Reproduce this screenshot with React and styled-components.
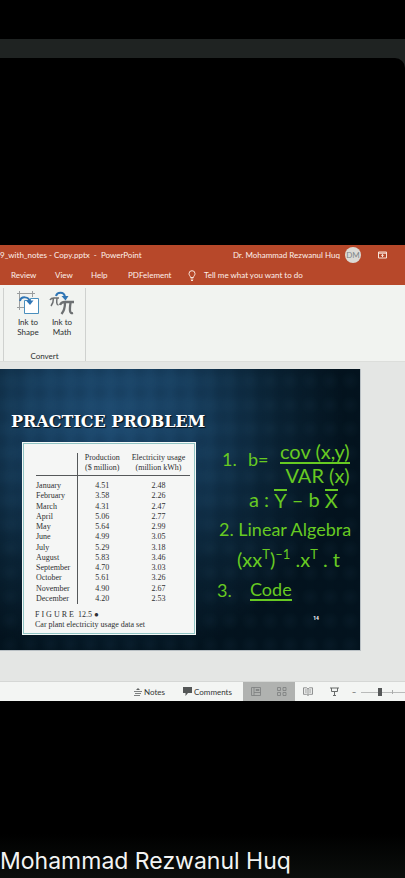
import React from "react";
import styled, { createGlobalStyle } from "styled-components";

const GlobalStyle = createGlobalStyle`
  * { box-sizing: border-box; }
  body { margin: 0; background: #000; overflow-x: hidden; font-family: "Lato", "Noto Sans", sans-serif; }
  button { border: 0; padding: 0; margin: 0; background: none; font: inherit; color: inherit; white-space: nowrap; }
`;

const Screen = styled.div`
  min-height: 100vh;
  display: flex;
  flex-direction: column;
  overflow: hidden;
  background: #000;
`;
const TopBand = styled.div`
  margin-top: 39px;
  padding-top: 19px;
  background: #1f2322;
`;
const StageTop = styled.div`
  height: 187px;
  background: #000;
  border-top-right-radius: 10px;
`;
const Header = styled.header`
  background: #b7482a;
  color: #fdf0ea;
  font-size: 8px;
  line-height: 20px;
`;
const TitleBar = styled.div`
  display: flex;
  align-items: center;
  height: 20px;
  white-space: pre;
`;
const FileName = styled.span`
  flex: 1;
`;
const Avatar = styled.span`
  width: 16px;
  height: 16px;
  margin: 0 17px 0 5px;
  border-radius: 50%;
  background: #dcdad5;
  color: #7d8588;
  line-height: 16px;
  text-align: center;
`;
const DisplayButton = styled.button`
  display: flex;
  margin-right: 18px;
`;
const Tabs = styled.nav`
  display: flex;
  align-items: center;
  height: 20px;
  padding-left: 11px;
`;
const Tab = styled.button`
  width: ${(p) => p.$width}px;
  text-align: left;
`;
const TellMe = styled.button`
  display: flex;
  align-items: center;
  gap: 8px;
`;
const Ribbon = styled.section`
  display: flex;
  height: 77px;
  padding: 3px 0 0 3px;
  background: #f1f3f0;
  border-bottom: 1px solid #dcdedb;
  color: #2e3030;
  font-size: 8px;
`;
const Group = styled.div`
  display: flex;
  flex-direction: column;
  justify-content: space-between;
  width: 83px;
  border: solid #cfd1cf;
  border-width: 0 1px;
`;
const Tools = styled.div`
  display: flex;
  padding: 3px 0 0 7px;
`;
const Tool = styled.button`
  display: flex;
  flex-direction: column;
  align-items: center;
  width: 34px;
  line-height: 10px;
  text-align: center;
`;
const GroupName = styled.div`
  line-height: 10px;
  text-align: center;
`;
const Workspace = styled.main`
  padding: 7px 44px 30px 0;
  background: #e4e6e4;
`;
const Slide = styled.section`
  min-height: 282px;
  padding: 40px 0 13px 11px;
  border: solid #b9c0c4;
  border-width: 0 1px 1px 0;
  color: #fff;
  background:
    radial-gradient(circle at 50% 50%, rgba(90, 150, 190, 0.04) 0 2px, transparent 9px) 0 0 / 20px 24px,
    radial-gradient(circle at 50% 50%, rgba(0, 10, 25, 0.08) 0 2px, transparent 9px) 10px 12px / 20px 24px,
    radial-gradient(ellipse 235px 240px at 110px 55px, #1d4a70 0%, #173e5e 35%, #0a2335 70%, #03131e 100%);
`;
const SlideTitle = styled.h1`
  margin: 0;
  font: bold 16px/25px "DejaVu Serif", serif;
  text-shadow: 1px 1px 1px #06121c;
  white-space: nowrap;
`;
const SlideBody = styled.div`
  display: flex;
  align-items: flex-start;
  margin-top: 8px;
`;
const Figure = styled.figure`
  flex: none;
  width: 174px;
  margin: 0 0 0 11px;
  padding: 10px 4px 4px 13px;
  border: 1px solid #f4f9f8;
  box-shadow: inset 0 0 0 1px #91c4c4;
  background: #f5f6f5;
  color: #2f3032;
  font: 8px/10px "Liberation Serif", serif;
`;
const DataTable = styled.table`
  width: 154px;
  height: 151px;
  border-collapse: collapse;
  white-space: nowrap;
  th, td { padding: 0; font-weight: 400; text-align: center; }
  th:first-child { width: 41px; text-align: left; border-right: 1px solid #55585a; }
  th:nth-child(2) { width: 50px; }
  thead th { height: 22px; padding-bottom: 2px; border-bottom: 1px solid #55585a; }
  tbody tr:first-child > * { padding-top: 5px; }
`;
const Caption = styled.figcaption`
  padding-top: 6px;
  margin-left: -1px;
  line-height: 10px;
`;
const Spaced = styled.span`
  white-space: pre;
`;
const Ink = styled.div`
  flex: 1;
  min-width: 0;
  padding-left: 21px;
  color: #67ca22;
  font: 18px/20px "Lato", sans-serif;
  white-space: pre;
`;
const InkRow = styled.div`
  display: flex;
  align-items: center;
  height: ${(p) => p.$height}px;
  padding-left: ${(p) => p.$indent || 0}px;
  font-size: ${(p) => p.$size || 18}px;
`;
const InkWord = styled.span`
  width: ${(p) => p.$width}px;
  padding-bottom: ${(p) => (p.$lifted ? 8 : 0)}px;
`;
const Fraction = styled.span`
  display: flex;
  flex-direction: column;
  align-items: flex-end;
  font-size: 20px;
  line-height: 22px;
`;
const Numerator = styled.span`
  border-bottom: 2px solid #67ca22;
`;
const Bar = styled.span`
  border-top: 2px solid #67ca22;
  line-height: 18px;
`;
const Underlined = styled.span`
  border-bottom: 2px solid #67ca22;
`;
const Raised = styled.sup`
  font-size: 13px;
  line-height: 0;
`;
const PageNumber = styled.div`
  padding: 8px 41px 0 0;
  color: #fff;
  font: bold 5px/8px "Roboto", sans-serif;
  text-align: right;
`;
const StatusBar = styled.footer`
  display: flex;
  align-items: center;
  height: 20px;
  padding-left: 134px;
  border-top: 1px solid #d5d7d5;
  background: #f3f5f3;
  color: #333636;
  font-size: 8px;
`;
const StatusButton = styled.button`
  display: flex;
  align-items: center;
  gap: 2px;
  width: ${(p) => p.$width}px;
`;
const ViewButton = styled.button`
  display: flex;
  align-items: center;
  justify-content: center;
  width: 26px;
  height: 19px;
  background: ${(p) => (p.$active ? "#b0b2b0" : "transparent")};
`;
const ZoomOut = styled.button`
  display: flex;
  align-items: center;
  justify-content: center;
  width: 14px;
  height: 19px;
`;
const ZoomSlider = styled.input`
  flex: 1;
  min-width: 0;
  height: 19px;
  margin: 0;
  appearance: none;
  background:
    linear-gradient(#a9abaa, #a9abaa) 31px 8px / 1px 4px no-repeat,
    linear-gradient(#b9bbba, #b9bbba) 0 10px / 100% 1px no-repeat;
  &::-webkit-slider-thumb {
    appearance: none;
    width: 4px;
    height: 8px;
    background: #555858;
  }
`;
const Speaker = styled.footer`
  flex: 1;
  display: flex;
  align-items: flex-end;
  padding-bottom: 1px;
  background: linear-gradient(#000 75%, #0b0e0c);
  color: #f3f4f3;
  font: 23px/32px "Inter", sans-serif;
  white-space: nowrap;
`;

const rows = [
  ["January", "4.51", "2.48"], ["February", "3.58", "2.26"], ["March", "4.31", "2.47"],
  ["April", "5.06", "2.77"], ["May", "5.64", "2.99"], ["June", "4.99", "3.05"],
  ["July", "5.29", "3.18"], ["August", "5.83", "3.46"], ["September", "4.70", "3.03"],
  ["October", "5.61", "3.26"], ["November", "4.90", "2.67"], ["December", "4.20", "2.53"],
];

const DisplayIcon = () => (
  <svg width="9" height="8" viewBox="0 0 9 8" fill="none" stroke="#f8e4da">
    <path d="M.5 1h8v6h-8zM.5 2.2h8M4.5 6V3.5M3.2 4.7l1.3-1.3 1.3 1.3" />
  </svg>
);
const Bulb = () => (
  <svg width="8" height="11" viewBox="0 0 8 11" fill="none" stroke="#f8e4da">
    <path d="M2.5 7.5C2.5 6 1 5.5 1 3.7a3 3 0 0 1 6 0c0 1.8-1.5 2.3-1.5 3.8zM2.7 9h2.6M3 10.5h2" />
  </svg>
);
const InkShape = () => (
  <svg width="24" height="26" viewBox="0 0 24 26" fill="none">
    <path d="M1 2.500h18M3.500 0v19M16.500 0v6M1 16.500h7" stroke="#9a9d9e" />
    <path d="M8.500 9.500h6v-2h8v15h-14z" fill="#fff" stroke="#4a8fbd" />
    <path d="M4 10c1-5 9-5 10 1" stroke="#2f75b5" strokeWidth="2" />
    <path d="M10 9.500h7.500l-3.500 4.500z" fill="#2f75b5" />
  </svg>
);
const InkMath = () => (
  <svg width="26" height="26" viewBox="0 0 26 26" fill="none" stroke="#6d7072">
    <path d="M1 9c1-2 2-2 4-2h5M4.500 7c0 4-1 6-2.500 8M8 7c-.5 4-.6 7 1.500 7" strokeWidth="1.500" />
    <path d="M11 14c1-3 3-3 5-3h9M16 12c0 5-1 8-3.500 11M21.500 12c-1 7-1 11 2.500 10" strokeWidth="2.300" />
    <path d="M7 5c1-4 8-5 9 1" stroke="#2f75b5" strokeWidth="2" />
    <path d="M12.500 5h7l-3 4.500z" fill="#2f75b5" stroke="none" />
  </svg>
);
const NotesIcon = () => (
  <svg width="8" height="9" viewBox="0 0 8 9" fill="none" stroke="#606363">
    <path d="M0 4.500h8M1 6.500h6M0 8.500h6" strokeWidth=".8" /><path d="M2 3l2-2 2 2z" fill="#606363" stroke="none" />
  </svg>
);
const CommentIcon = () => (
  <svg width="9" height="9" viewBox="0 0 9 9" fill="#545757"><path d="M0 0h9v6H5L2.500 9V6H0z" /></svg>
);
const NormalIcon = () => (
  <svg width="10" height="9" viewBox="0 0 10 9" fill="none" stroke="#7b7e7d"><path d="M.5.500h9v8h-9zM3 .5v8M3 5.500h6.500M5 2.500h3v1H5z" strokeWidth=".8" /></svg>
);
const SorterIcon = () => (
  <svg width="10" height="9" viewBox="0 0 10 9" fill="none" stroke="#7b7e7d"><path d="M.5.500h3v3h-3zM6 .5h3v3H6zM.5 5.500h3v3h-3zM6 5.500h3v3H6z" strokeWidth=".8" /></svg>
);
const BookIcon = () => (
  <svg width="10" height="9" viewBox="0 0 10 9" fill="none" stroke="#767978"><path d="M.5.800h3L5 2l1.500-1.200h3v6.500h-3L5 8.500 3.500 7.300h-3zM5 2v6M1.800 3h2M1.800 5h2M6.200 3h2M6.200 5h2" strokeWidth=".8" /></svg>
);
const ShowIcon = () => (
  <svg width="9" height="9" viewBox="0 0 9 9" fill="none" stroke="#676a69"><path d="M0 1h9M1.500 1v3.500h6V1M4.500 4.500V8M3 8.500h3" /></svg>
);

export default function App() {
  return (
    <Screen>
      <GlobalStyle />
      <TopBand><StageTop /></TopBand>
      <Header>
        <TitleBar>
          <FileName>9_with_notes - Copy.pptx  -  PowerPoint</FileName>
          <span>Dr. Mohammad Rezwanul Huq</span>
          <Avatar>DM</Avatar>
          <DisplayButton aria-label="Ribbon display options"><DisplayIcon /></DisplayButton>
        </TitleBar>
        <Tabs>
          <Tab $width={44}>Review</Tab>
          <Tab $width={36}>View</Tab>
          <Tab $width={37}>Help</Tab>
          <Tab $width={60}>PDFelement</Tab>
          <TellMe><Bulb />Tell me what you want to do</TellMe>
        </Tabs>
      </Header>
      <Ribbon>
        <Group>
          <Tools>
            <Tool><InkShape />Ink to<br />Shape</Tool>
            <Tool><InkMath />Ink to<br />Math</Tool>
          </Tools>
          <GroupName>Convert</GroupName>
        </Group>
      </Ribbon>
      <Workspace>
        <Slide>
          <SlideTitle>PRACTICE PROBLEM</SlideTitle>
          <SlideBody>
            <Figure>
              <DataTable>
                <thead>
                  <tr>
                    <th />
                    <th scope="col">Production<br />($ million)</th>
                    <th scope="col">Electricity usage<br />(million kWh)</th>
                  </tr>
                </thead>
                <tbody>
                  {rows.map(([month, production, usage]) => (
                    <tr key={month}><th scope="row">{month}</th><td>{production}</td><td>{usage}</td></tr>
                  ))}
                </tbody>
              </DataTable>
              <Caption><Spaced>F I G U R E  12.5 ●</Spaced><br />Car plant electricity usage data set</Caption>
            </Figure>
            <Ink>
              <InkRow $height={41} $indent={5}>
                <InkWord $width={26} $lifted>1.</InkWord>
                <InkWord $width={32} $lifted>b=</InkWord>
                <Fraction><Numerator>cov (x,y)</Numerator><span>VAR (x)</span></Fraction>
              </InkRow>
              <InkRow $height={31} $indent={32} $size={20}>a : <Bar>Y</Bar> – b <Bar>X</Bar></InkRow>
              <InkRow $height={30} $indent={2}>2. Linear Algebra</InkRow>
              <InkRow $height={30} $indent={20} $size={20}><span>(xx<Raised>T</Raised>)<Raised>–1</Raised> .x<Raised>T</Raised> . t</span></InkRow>
              <InkRow $height={32}><InkWord $width={33}>3.</InkWord><Underlined>Code</Underlined></InkRow>
              <PageNumber>14</PageNumber>
            </Ink>
          </SlideBody>
        </Slide>
      </Workspace>
      <StatusBar>
        <StatusButton $width={49}><NotesIcon />Notes</StatusButton>
        <StatusButton $width={60}><CommentIcon />Comments</StatusButton>
        <ViewButton $active aria-label="Normal view"><NormalIcon /></ViewButton>
        <ViewButton $active aria-label="Slide sorter"><SorterIcon /></ViewButton>
        <ViewButton aria-label="Reading view"><BookIcon /></ViewButton>
        <ViewButton aria-label="Slide show"><ShowIcon /></ViewButton>
        <ZoomOut aria-label="Zoom out">–</ZoomOut>
        <ZoomSlider type="range" aria-label="Zoom" min="0" max="100" defaultValue="43" />
      </StatusBar>
      <Speaker>Mohammad Rezwanul Huq</Speaker>
    </Screen>
  );
}
